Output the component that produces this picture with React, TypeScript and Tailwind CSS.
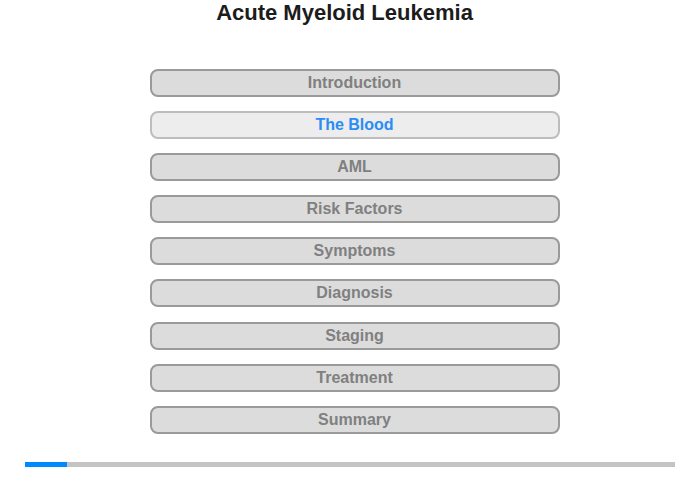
import React from 'react';

const sections = [
  'Introduction',
  'The Blood',
  'AML',
  'Risk Factors',
  'Symptoms',
  'Diagnosis',
  'Staging',
  'Treatment',
  'Summary',
];

export default function App() {
  const active = 'The Blood';

  return (
    <div className="w-[700px] h-[480px] bg-white flex flex-col items-center font-['Liberation_Sans',Arial,sans-serif]">
      {/* Title */}
      <h1 className="mr-[11px] h-[26px] leading-[26px] text-[22px] font-bold text-[#1c1c1c]">
        Acute Myeloid Leukemia
      </h1>

      {/* Section menu */}
      <div className="ml-[9px] mt-[43px] flex flex-col gap-[14.1px]">
        {sections.map((s) => {
          const isActive = s === active;
          return (
            <div
              key={s}
              className={
                isActive
                  ? 'w-[410px] h-[28px] rounded-[8px] border-2 border-[#bdbdbd] bg-[#ededed] flex items-center justify-center text-[16px] font-bold text-[#2a8cf5]'
                  : 'w-[410px] h-[28px] rounded-[8px] border-2 border-[#9a9a9a] bg-[#dcdcdc] flex items-center justify-center text-[16px] font-bold text-[#808080]'
              }
            >
              {s}
            </div>
          );
        })}
      </div>

      {/* Progress */}
      <div className="mt-[28px] w-[650px] h-[5px] bg-[#c4c4c4] flex">
        <div className="w-[42px] h-full bg-[#0088ff]" />
      </div>
    </div>
  );
}
